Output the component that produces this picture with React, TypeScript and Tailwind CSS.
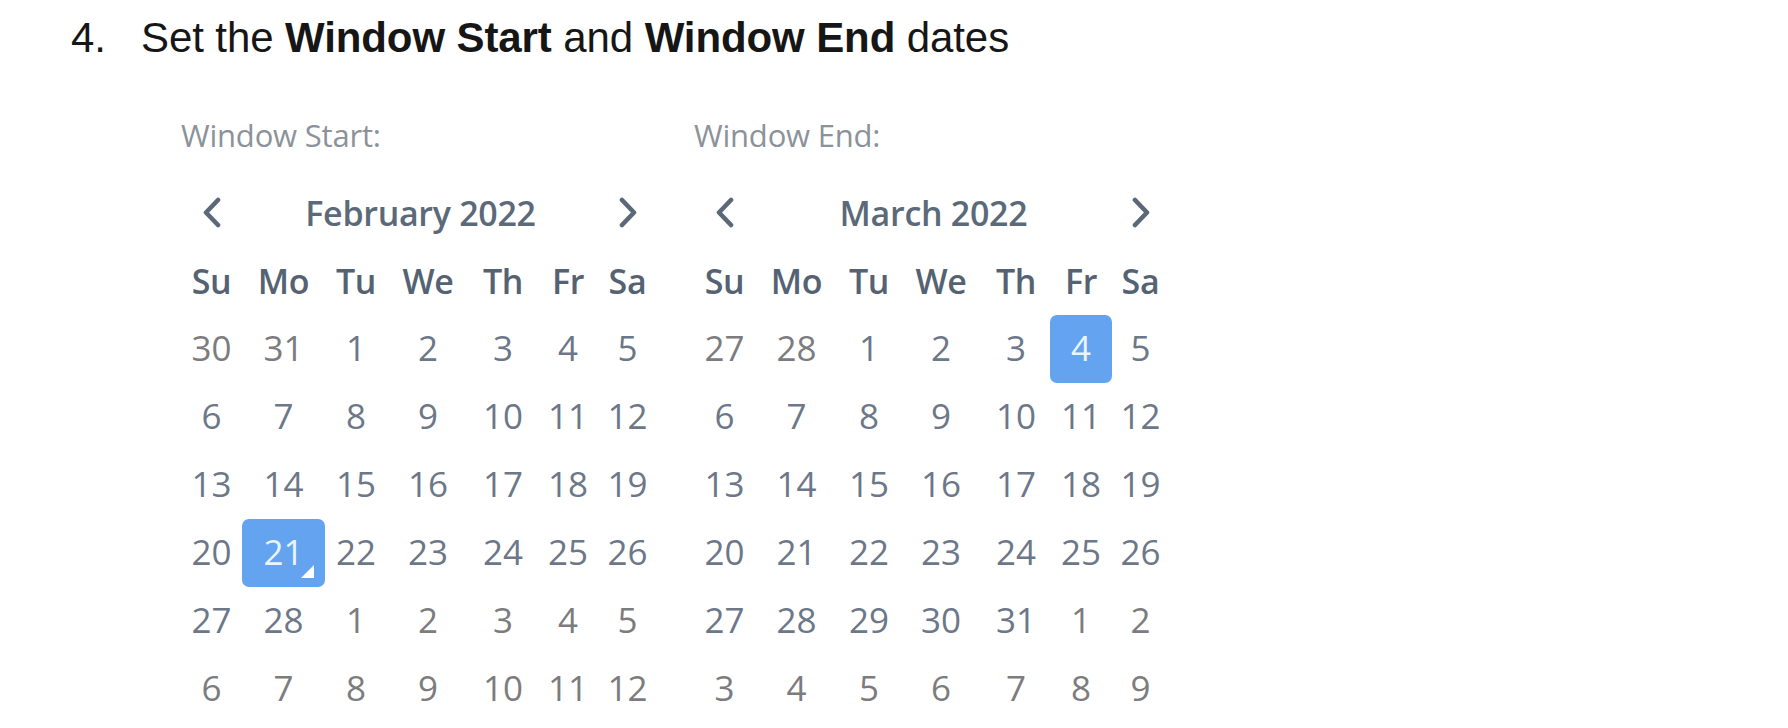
import React from "react";

type Day = { n: number; out?: boolean; sel?: boolean; corner?: boolean };

const feb: Day[][] = [
  [{ n: 30, out: true }, { n: 31, out: true }, { n: 1 }, { n: 2 }, { n: 3 }, { n: 4 }, { n: 5 }],
  [{ n: 6 }, { n: 7 }, { n: 8 }, { n: 9 }, { n: 10 }, { n: 11 }, { n: 12 }],
  [{ n: 13 }, { n: 14 }, { n: 15 }, { n: 16 }, { n: 17 }, { n: 18 }, { n: 19 }],
  [{ n: 20 }, { n: 21, sel: true, corner: true }, { n: 22 }, { n: 23 }, { n: 24 }, { n: 25 }, { n: 26 }],
  [{ n: 27 }, { n: 28 }, { n: 1, out: true }, { n: 2, out: true }, { n: 3, out: true }, { n: 4, out: true }, { n: 5, out: true }],
  [{ n: 6, out: true }, { n: 7, out: true }, { n: 8, out: true }, { n: 9, out: true }, { n: 10, out: true }, { n: 11, out: true }, { n: 12, out: true }],
];

const mar: Day[][] = [
  [{ n: 27, out: true }, { n: 28, out: true }, { n: 1 }, { n: 2 }, { n: 3 }, { n: 4, sel: true }, { n: 5 }],
  [{ n: 6 }, { n: 7 }, { n: 8 }, { n: 9 }, { n: 10 }, { n: 11 }, { n: 12 }],
  [{ n: 13 }, { n: 14 }, { n: 15 }, { n: 16 }, { n: 17 }, { n: 18 }, { n: 19 }],
  [{ n: 20 }, { n: 21 }, { n: 22 }, { n: 23 }, { n: 24 }, { n: 25 }, { n: 26 }],
  [{ n: 27 }, { n: 28 }, { n: 29 }, { n: 30 }, { n: 31 }, { n: 1, out: true }, { n: 2, out: true }],
  [{ n: 3, out: true }, { n: 4, out: true }, { n: 5, out: true }, { n: 6, out: true }, { n: 7, out: true }, { n: 8, out: true }, { n: 9, out: true }],
];

const weekdays = ["Su", "Mo", "Tu", "We", "Th", "Fr", "Sa"];

function Chevron({ dir }: { dir: "left" | "right" }) {
  return (
    <svg width="24" height="32" viewBox="0 0 24 32" fill="none">
      {dir === "left" ? (
        <polyline points="18,3 6,15.5 18,28" stroke="#5b6878" strokeWidth="4.6" strokeLinecap="round" strokeLinejoin="round" />
      ) : (
        <polyline points="6,3 18,15.5 6,28" stroke="#5b6878" strokeWidth="4.6" strokeLinecap="round" strokeLinejoin="round" />
      )}
    </svg>
  );
}

function Calendar({ label, title, rows }: { label: string; title: string; rows: Day[][] }) {
  return (
    <div className="flex flex-col w-[475px]">
      <div className="text-[31px] leading-[40px] text-[#8b929a] h-[40px] tracking-[-0.2px]">{label}</div>
      <div className="grid grid-cols-[61px_83px_62px_82px_68px_62px_57px] mt-[34px] h-[48px] items-center">
        <div className="flex justify-center">
          <Chevron dir="left" />
        </div>
        <div className="col-span-5 text-center text-[34px] leading-[48px] font-semibold text-[#5b6979] tracking-[-0.3px]">
          {title}
        </div>
        <div className="flex justify-center">
          <Chevron dir="right" />
        </div>
      </div>
      <div className="grid grid-cols-[61px_83px_62px_82px_68px_62px_57px] mt-[20px] h-[48px]">
        {weekdays.map((w) => (
          <div key={w} className="text-center text-[34px] leading-[48px] font-semibold text-[#546272] tracking-[-0.3px]">
            {w}
          </div>
        ))}
      </div>
      <div className="grid grid-cols-[61px_83px_62px_82px_68px_62px_57px] mt-[10px] auto-rows-[68px]">
        {rows.flat().map((d, i) => (
          <div
            key={i}
            className={
              d.sel
                ? "relative flex items-center justify-center rounded-[7px] bg-[#63a3ef] text-[#eaf4ff] text-[35px] leading-[68px]"
                : d.out
                ? "flex items-center justify-center text-[#7c7c7e] text-[35px] leading-[68px]"
                : "flex items-center justify-center text-[#6c7788] text-[35px] leading-[68px]"
            }
          >
            <span className="-mt-[2px]">{d.n}</span>
            {d.corner && (
              <svg className="absolute right-[11px] bottom-[9px]" width="13" height="13" viewBox="0 0 13 13">
                <polygon points="13,0 13,13 0,13" fill="#ffffff" />
              </svg>
            )}
          </div>
        ))}
      </div>
    </div>
  );
}

export default function App() {
  return (
    <div className="w-[1788px] h-[728px] bg-white overflow-hidden" style={{ fontFamily: '"Open Sans", "Noto Sans", sans-serif' }}>
      <div
        className="flex pl-[71px] pt-[14px] text-[42px] leading-[48px] text-[#161616] h-[62px] tracking-[-0.1px]"
        style={{ fontFamily: '"Liberation Sans", Arial, sans-serif' }}
      >
        <span className="w-[70px]">4.</span>
        <span>
          Set the <b className="font-bold">Window Start</b> and <b className="font-bold">Window End</b> dates
        </span>
      </div>
      <div className="flex gap-[38px] pl-[181px] pt-[53px]">
        <Calendar label="Window Start:" title="February 2022" rows={feb} />
        <Calendar label="Window End:" title="March 2022" rows={mar} />
      </div>
    </div>
  );
}
